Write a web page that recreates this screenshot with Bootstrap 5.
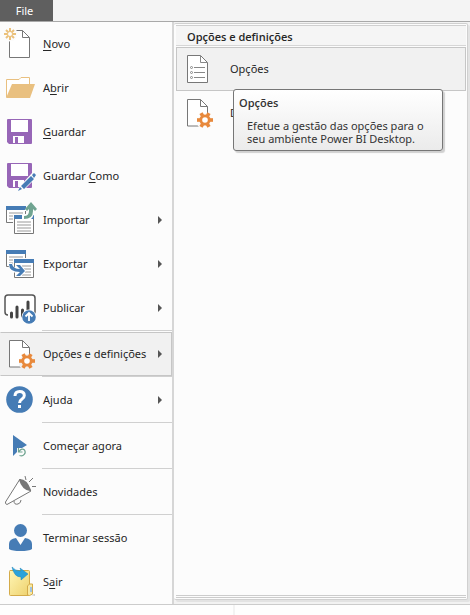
<!DOCTYPE html>
<html lang="pt">
<head>
<meta charset="utf-8">
<meta name="viewport" content="width=device-width, initial-scale=1">
<title>Ficheiro</title>
<link href="https://cdn.jsdelivr.net/npm/bootstrap@5.3.0/dist/css/bootstrap.min.css" rel="stylesheet">
<style>
body{font-family:"Noto Sans","Open Sans",sans-serif;font-size:11px;line-height:16px;color:#262626;background:#fff;min-height:100vh}
.ribbon{background:#f4f4f4;border-bottom:1px solid #a9a9a9}
.file-tab{background:#5f5f5f;color:#fff;width:53px;height:21px;padding:0 4px 0 0;border:0;line-height:19px}
.backstage{background:#fcfcfc;border-bottom:1px solid #ccc}
.main-menu{width:174px;border-right:2px solid #d6d6d6}
.entry{height:44px;border:1px solid transparent;background:transparent;color:inherit;padding:0}
.entry svg{width:42px;height:44px;margin:-1px 1px -1px -1px}
.entry.current{background:#f1f1f1;border-color:#c6c6c6}
.main-menu .entry.current{border-left-color:#f1f1f1}
.entry u{text-underline-offset:2px}
.more::after{content:"";margin-left:auto;margin-right:9px;border:4px solid transparent;border-left:4px solid #555;border-right:0}
.rule{height:2px;margin-left:42px;background:linear-gradient(#d0d0d0 50%,#fcfcfc 50%)}
.side{background:#f2f2f2;padding:1px 2px 4px 0}
.panel{background:#fcfcfc;border:1px solid #d0d0d0;border-left:0;border-radius:2px;box-shadow:2px 2px 0 #e3e3e3;padding:1px 1px 1px 2px}
.panel h2,.tip strong{font-family:"Open Sans","Noto Sans",sans-serif;font-size:11px;line-height:16px;font-weight:600}
.panel h2{background:#f5f5f5;border-top:1px solid #d0d0d0;border-bottom:1px solid #d6d6d6;padding:3px 11px 0;margin:0 0 1px}
.panel .entry svg{width:53px}
.panel-foot{height:3px;border-top:1px solid #ccc;border-bottom:1px solid #ccc}
.tip{position:absolute;left:57px;top:42px;width:210px;border:1px solid #767676;border-radius:3px;background:linear-gradient(#fff,#ebebeb);box-shadow:2px 2px 1px #d0d0d0;padding:5px;color:#333;z-index:2}
.tip p{padding:8px 8px 0;line-height:13px;margin:0}
.canvas-strip{height:10px;background:#fefefe}
.canvas-strip span{width:50%;border-right:2px solid #f3f3f3}
</style>
<script src="https://cdn.jsdelivr.net/npm/bootstrap@5.3.0/dist/js/bootstrap.bundle.min.js"></script>
</head>
<body class="d-flex flex-column">
<svg class="d-none" aria-hidden="true">
<defs>
<g id="gear"><g fill="#e8893c"><circle r="5.6"/><g id="teeth"><rect x="-8" y="-1.8" width="16" height="3.6"/><rect x="-8" y="-1.8" width="16" height="3.6" transform="rotate(60)"/><rect x="-8" y="-1.8" width="16" height="3.6" transform="rotate(120)"/></g></g><circle r="2.8" fill="#fff"/></g>
<g id="optpage"><path d="M9.500 8.500h13l7 7v19.500h-20z" fill="#fff" stroke="#777"/><path d="M22.500 8.500v7h7" fill="none" stroke="#777"/><circle cx="28" cy="31" r="9"/><use href="#gear" x="27" y="29"/></g>
<g id="disk"><path d="M8 9h23q1 0 1 1v23q0 1-1 1H9l-2-2V10q0-1 1-1z" fill="#9766b7"/><path d="M11 10h17v12H11zM13 26h11v7H13z" fill="#fff"/><path d="M15 27h3v6h-3z" fill="#9766b7"/></g>
<g id="sheetA"><path d="M6.500 8.500h19v16h-19z" fill="#fff" stroke="#777"/><path d="M6 8h20v4H6z" fill="#467cb5"/><path d="M9 15h14M9 18h14M9 21h14" stroke="#999"/></g>
</defs></svg>
<header class="ribbon d-flex"><button type="button" class="file-tab">File</button></header>
<div class="backstage d-flex flex-grow-1">
<nav class="main-menu flex-shrink-0 d-flex flex-column" aria-label="File">
<button type="button" class="entry w-100 d-flex align-items-center text-start"><svg viewBox="0 0 42 44"><path d="M9.500 8.500h13l7 7v20h-20z" fill="#fff" stroke="#777"/><path d="M22.500 8.500v7h7" fill="none" stroke="#777"/><circle cx="10" cy="12" r="7.500" fill="#fcfcfc"/><path d="M10 6v4M10 14v4M4 12h4M12 12h4M6 8l2.500 2.500M11.500 13.500L14 16M14 8l-2.500 2.500M8.500 13.500L6 16" stroke="#ebc17b" stroke-width="2"/><circle cx="10" cy="12" r="2.500" fill="#fff" stroke="#ebc17b"/></svg><span><u>N</u>ovo</span></button>
<button type="button" class="entry w-100 d-flex align-items-center text-start"><svg viewBox="0 0 42 44"><path d="M6.500 31V13.500H19l2-2h8.500V18" fill="#fff" stroke="#e9c080"/><path d="M12 18h23l-5 14H6z" fill="#e9c080"/></svg><span>A<u>b</u>rir</span></button>
<button type="button" class="entry w-100 d-flex align-items-center text-start"><svg viewBox="0 0 42 44"><use href="#disk"/></svg><span><u>G</u>uardar</span></button>
<button type="button" class="entry w-100 d-flex align-items-center text-start"><svg viewBox="0 0 42 44"><use href="#disk"/><path d="M17 39l3-7 12-13 5 4-13 13z" fill="#fcfcfc"/><path d="M18 37l2-4 2 2zM21 32l10-10 3 3-10 10zM32 21l2-2 2 2-2 3z" fill="#467cb5"/></svg><span>Guardar <u>C</u>omo</span></button>
<button type="button" class="entry more w-100 d-flex align-items-center text-start"><svg viewBox="0 0 42 44"><use href="#sheetA"/><path d="M13 16h22v21H13z" fill="#fcfcfc"/><path d="M14.500 17.500h19v18h-19z" fill="#fff" stroke="#777"/><path d="M14 17h20v4H14z" fill="#467cb5"/><path d="M17 24h14M17 27h14M17 30h14M17 33h14" stroke="#999"/><path d="M22 22v-5q5 0 5-4h-3l7-9 7 9h-4q0 9-7 9z" fill="#fff"/><path d="M24 21v-3q5 0 5-5v-2l-2 2-2-2 6-7 6 7-2 2-2-2v2q0 8-9 8z" fill="#70a491"/></svg><span>Importar</span></button>
<button type="button" class="entry more w-100 d-flex align-items-center text-start"><svg viewBox="0 0 42 44"><use href="#sheetA"/><path d="M13 16h22v21H13z" fill="#fcfcfc"/><path d="M14.500 17.500h19v18h-19z" fill="#fff" stroke="#777"/><path d="M14 17h20v4H14z" fill="#467cb5"/><path d="M22 24h9M24 27h7M25 30h6M22 33h9" stroke="#999"/><path d="M8 21h4l3 5h3l-3-4h5l6 7-6 6h-5l3-4q-9 0-10-10z" fill="#fff"/><path d="M9 22h3q1 5 8 5l-4-4h4l5 6-5 5h-4l4-4q-11 0-11-8z" fill="#467cb5"/></svg><span>Exportar</span></button>
<button type="button" class="entry more w-100 d-flex align-items-center text-start"><svg viewBox="0 0 42 44"><path d="M8 29q-3 0-3-3V12q0-3 3-3h24q3 0 3 3v14q0 2-2 3" fill="#fff" stroke="#555" stroke-width="1.500"/><path d="M11.500 27v4M17 21v10M22.500 24v6M28 16v9" stroke="#444" stroke-width="3" stroke-linecap="round"/><circle cx="29" cy="31" r="7.500" fill="#fff"/><circle cx="29" cy="31" r="6.800" fill="#467cb5"/><path d="M29 35v-8M25.500 30.500L29 27l3.500 3.500" fill="none" stroke="#fff" stroke-width="1.800"/></svg><span>Publicar</span></button>
<div class="rule"></div>
<button type="button" class="entry more current w-100 d-flex align-items-center text-start" aria-current="true"><svg viewBox="0 0 42 44" fill="#f1f1f1"><use href="#optpage"/></svg><span>Opções e definições</span></button>
<div class="rule"></div>
<button type="button" class="entry more w-100 d-flex align-items-center text-start"><svg viewBox="0 0 42 44"><circle cx="19.500" cy="21.500" r="13.300" fill="#467cb5"/><path d="M15 18q0-4.500 4.700-4.500 4.600 0 4.600 4 0 2.200-2.500 3.800-2.200 1.400-2.200 3.700" fill="none" stroke="#fff" stroke-width="3"/><path d="M18 27h3v3h-3z" fill="#fff"/></svg><span>Ajuda</span></button>
<div class="rule"></div>
<button type="button" class="entry w-100 d-flex align-items-center text-start"><svg viewBox="0 0 42 44"><path d="M13 11l14 10-5 3h-5v4l-4 4z" fill="#467cb5"/><path d="M18.500 24v4h4M19 27.500q3-4 5.500-1.500c2 3-1 7-5 5.500" fill="none" stroke="#70a491" stroke-width="1.200"/></svg><span>Começar agora</span></button>
<div class="rule"></div>
<button type="button" class="entry w-100 d-flex align-items-center text-start"><svg viewBox="0 0 42 44"><path d="M20 9L5.500 32q-.5 2 1.500 2.500L31 21z" fill="#fff" stroke="#777"/><path d="M20 9q7 0 11 11l-1 1q-8-1-11-11z" fill="#777"/><path d="M14 31q0 4 4 3 3-1 3-4M25 6l1 4M33 8l-4 4M32 16.500h4" fill="none" stroke="#777"/></svg><span>Novidades</span></button>
<div class="rule"></div>
<button type="button" class="entry w-100 d-flex align-items-center text-start"><svg viewBox="0 0 42 44"><circle cx="20.500" cy="14.500" r="6.500" fill="#467cb5"/><path d="M9 33v-5q0-5 7-6l4.500 7 4.500-7q7 1 7 6v5q-3 2-11.500 2T9 33z" fill="#467cb5"/></svg><span>Terminar sessão</span></button>
<button type="button" class="entry w-100 d-flex align-items-center text-start"><svg viewBox="0 0 42 44"><defs><linearGradient id="folder" x2="1" y2="1"><stop stop-color="#fff6b5"/><stop offset="1" stop-color="#eed16d"/></linearGradient></defs><path d="M31 35l4-1v2z" fill="#ccc"/><path d="M10 10.500h18.500q1 0 1 1v23q0 1-1 1H10.500q-1 0-1-1v-23q0-1 .5-1z" fill="url(#folder)" stroke="#d4ab49"/><path d="M27.500 35V26l2-2h3v10l-3 1.500z" fill="#f8e9a1" stroke="#d4ab49"/><path d="M30 27h2v5h-2z" fill="#9fc1e0"/><path d="M12 7q3 4 9 4l-1-3 8 6-7 6v-3q-7 0-9-10z" fill="#2ba2da" stroke="#1683ba" stroke-width=".5"/></svg><span>S<u>a</u>ir</span></button>
</nav>
<div class="side flex-grow-1 d-flex">
<section class="panel flex-grow-1 d-flex flex-column" aria-labelledby="sideTitle">
<h2 id="sideTitle">Opções e definições</h2>
<div class="position-relative">
<button type="button" class="entry current w-100 d-flex align-items-center text-start" aria-describedby="tipBox"><svg viewBox="0 0 53 44"><path d="M11.500 8.500h13l7 7v20h-20z" fill="#fff" stroke="#777"/><path d="M24.500 8.500v7h7M18 20.500h11M18 25.500h11M18 30.500h11" fill="none" stroke="#888"/><g fill="#fff" stroke="#888"><circle cx="15.500" cy="20.500" r="1"/><circle cx="15.500" cy="25.500" r="1"/><circle cx="15.500" cy="30.500" r="1"/></g></svg><span>Opções</span></button>
<div id="tipBox" class="tip" role="tooltip"><strong class="d-block">Opções</strong><p>Efetue a gestão das opções para o seu ambiente Power BI Desktop.</p></div>
</div>
<button type="button" class="entry w-100 d-flex align-items-center text-start"><svg viewBox="0 0 53 44" fill="#fcfcfc"><use href="#optpage" x="2"/></svg><span>Definições</span></button>
<div class="panel-foot mt-auto"></div>
</section>
</div>
</div>
<footer class="canvas-strip d-flex"><span></span></footer>
</body>
</html>
